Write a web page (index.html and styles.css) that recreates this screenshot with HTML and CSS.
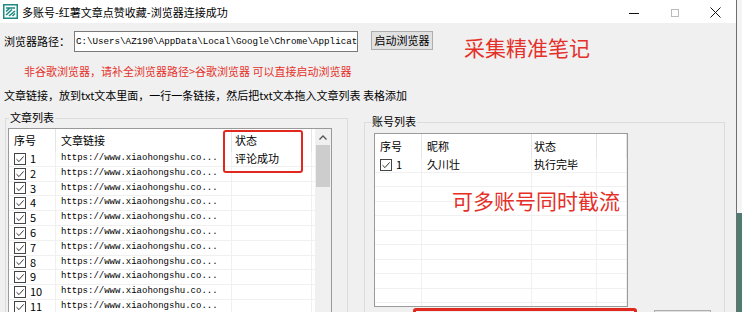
FILE: index.html
```html
<!DOCTYPE html>
<html lang="zh-CN">
  <head>
    <meta charset="UTF-8" />
    <meta name="viewport" content="width=device-width, initial-scale=1.0" />
    <title>多账号-红薯文章点赞收藏</title>
    <link rel="stylesheet" href="styles.css">
  </head>
  <body>
    <div class="desktop">
      <div class="window">
        <div class="titlebar">
          <svg class="app-icon" viewBox="0 0 15 15">
            <rect x="0.75" y="0.75" width="13.5" height="13.5" fill="#fff" stroke="#1d8a80" stroke-width="1.5" />
            <path d="M3 4H12M3 7.5L7 4M3 11L9 5.5M6 12L12 7M9.5 12L12 9.5" stroke="#1d8a80" stroke-width="1.6" fill="none" />
          </svg>
          <span class="title">多账号-红薯文章点赞收藏-浏览器连接成功</span>
          <div class="controls">
            <span class="ctl">
              <svg width="10" height="10"><path d="M0 5.5H10" stroke="#111" /></svg>
            </span>
            <span class="ctl">
              <svg width="10" height="10"><rect x="1.5" y="1.5" width="7" height="7" fill="none" stroke="#bbb" /></svg>
            </span>
            <span class="ctl">
              <svg width="11" height="11"><path d="M0.5 0.5L10.5 10.5M10.5 0.5L0.5 10.5" stroke="#111" /></svg>
            </span>
          </div>
        </div>

        <div class="content">
          <div class="path-row">
            <label class="path-label" for="browser-path">浏览器路径：</label>
            <input type="text" class="path-input" id="browser-path" value="C:\Users\AZ190\AppData\Local\Google\Chrome\Application\chrome.exe" />
            <button type="button" class="btn btn-launch">启动浏览器</button>
            <span class="big-note">采集精准笔记</span>
          </div>
          <p class="hint">非谷歌浏览器，请补全浏览器路径&gt;谷歌浏览器 可以直接启动浏览器</p>
          <p class="tip">文章链接，放到txt文本里面，一行一条链接，然后把txt文本拖入文章列表 表格添加</p>

          <div class="groups">
            <div class="group group-left">
              <span class="group-title">文章列表</span>
              <div class="listview lv-articles">
                <div class="lv-body">
                  <div class="lv-head">
                    <span>序号</span><span>文章链接</span><span>状态</span><span></span>
                  </div>
                  <div id="article-rows"></div>
                </div>
                <div class="scrollbar">
                  <span class="arrow">
                    <svg width="8" height="5"><path d="M0.5 4.5L4 1L7.5 4.5" stroke="#555" stroke-width="1.3" fill="none" /></svg>
                  </span>
                  <span class="thumb"></span>
                </div>
                <div class="mark mark-status"></div>
              </div>
            </div>

            <div class="group group-right">
              <span class="group-title">账号列表</span>
              <div class="listview lv-accounts">
                <div class="lv-head">
                  <span>序号</span><span>昵称</span><span>状态</span><span></span>
                </div>
                <div id="account-rows"></div>
                <span class="overlay-note">可多账号同时截流</span>
              </div>
              <div class="btn-row">
                <button type="button" class="btn btn-small"></button>
              </div>
              <div class="mark mark-bottom"></div>
            </div>
          </div>
        </div>
      </div>
      <div class="side"></div>
    </div>

    <script>
      const check = `<svg class="chk" viewBox="0 0 12 12"><rect x=".5" y=".5" width="11" height="11" fill="#fff" stroke="#444"/><path d="M2.5 6.2L5 8.6L9.6 3.4" fill="none" stroke="#333"/></svg>`;

      let str = "";
      for (let i = 1; i <= 11; i += 1) {
        str += `<div class="lv-row">
                  <span class="num">${check}${i}</span>
                  <span class="url">https://www.xiaohongshu.co...</span>
                  <span>${i == 1 ? "评论成功" : ""}</span>
                  <span></span>
                </div>`;
      }
      document.getElementById("article-rows").innerHTML = str;

      let acc = `<div class="lv-row">
                   <span class="num">${check}1</span><span>久川壮</span><span>执行完毕</span><span></span>
                 </div>`;
      for (let i = 0; i < 10; i += 1) {
        acc += `<div class="lv-row"><span></span><span></span><span></span><span></span></div>`;
      }
      document.getElementById("account-rows").innerHTML = acc;
    </script>
  </body>
</html>
```

FILE: styles.css
```css
* {
  box-sizing: border-box;
}
body {
  margin: 0;
  font-family: "Noto Sans CJK SC", "Microsoft YaHei", sans-serif;
  font-size: 11px;
  color: #000;
  background: #f0f0f0;
}
.desktop {
  display: flex;
  width: 742px;
  height: 312px;
  overflow: hidden;
}
.window {
  width: 736px;
  height: 312px;
  background: #f0f0f0;
  overflow: hidden;
}
.side {
  width: 6px;
  border-left: 1px solid #6f6f6f;
  background: linear-gradient(#f4f4f4 0 213px, #4f7b73 213px);
}

/* title bar */
.titlebar {
  height: 23px;
  background: #fff;
  display: flex;
  align-items: center;
}
.app-icon {
  width: 15px;
  height: 15px;
  margin-left: 3px;
}
.title {
  margin-left: 4px;
  line-height: 14px;
}
.controls {
  margin-left: auto;
  display: flex;
}
.ctl {
  width: 41px;
  height: 23px;
  display: flex;
  align-items: center;
  justify-content: center;
  padding-top: 2px;
}

/* top area */
.content {
  padding-left: 4px;
}
.path-row {
  display: flex;
  align-items: flex-start;
  height: 27px;
  margin-top: 8px;
}
.path-label {
  width: 70px;
  line-height: 21px;
}
.path-input {
  width: 284px;
  height: 21px;
  border: 1px solid #7a7a7a;
  padding: 0 0 0 1px;
  background: #fff;
  font-family: "Liberation Mono", monospace;
  font-size: 9.2px;
  outline: none;
}
.btn {
  border: 1px solid #adadad;
  background: #e1e1e1;
  font-family: inherit;
  font-size: 11px;
  padding: 0;
}
.btn-launch {
  margin-left: 13px;
  width: 62px;
  height: 19px;
  line-height: 17px;
}
.big-note {
  margin-left: 31px;
  margin-top: 5px;
  font-size: 21px;
  line-height: 22px;
  color: #e5302a;
}
.hint {
  margin: 6px 0 0 20px;
  line-height: 14px;
  color: #e5302a;
}
.tip {
  margin: 10px 0 0 0;
  line-height: 14px;
}

/* group boxes */
.groups {
  display: flex;
  align-items: flex-start;
  margin: 16px 0 0 1px;
}
.group {
  position: relative;
  height: 300px;
  border: 1px solid #dcdcdc;
}
.group-left {
  width: 343px;
}
.group-right {
  width: 361px;
  margin-left: 16px;
  margin-top: 4px;
}
.group-title {
  display: block;
  width: fit-content;
  padding: 0 1px;
  background: #f0f0f0;
  line-height: 14px;
  margin-top: -9px;
}
.group-left .group-title {
  margin-left: 3px;
  margin-bottom: 4px;
}
.group-right .group-title {
  margin-left: 6px;
  margin-bottom: 5px;
}

/* list views */
.listview {
  position: relative;
  background: #fff;
  border: 1px solid #9a9a9a;
  overflow: hidden;
}
.lv-head,
.lv-row {
  display: grid;
}
.lv-head span {
  border-right: 1px solid #e5e5e5;
  padding-left: 5px;
}
.lv-row span {
  border-right: 1px solid #f0f0f0;
  border-bottom: 1px solid #f0f0f0;
  padding-left: 5px;
  white-space: nowrap;
}
.lv-row .num {
  display: flex;
  align-items: center;
  gap: 4px;
}
.chk {
  width: 12px;
  height: 12px;
  flex: none;
}
.url {
  font-family: "Liberation Mono", monospace;
  font-size: 9px;
}

.lv-articles {
  display: flex;
  width: 324px;
  height: 200px;
  margin-left: 2px;
}
.lv-body {
  width: 306px;
}
.lv-articles .lv-head,
.lv-articles .lv-row {
  grid-template-columns: 47px 176px 80px 3px;
}
.lv-articles .lv-head {
  height: 23px;
  line-height: 23px;
}
.lv-articles .lv-row {
  height: 14.8px;
  line-height: 13.8px;
}
.lv-articles .lv-row span:nth-child(3),
.lv-articles .lv-head span:nth-child(3) {
  padding-left: 3px;
}
.scrollbar {
  width: 16px;
  background: #f0f0f0;
  display: flex;
  flex-direction: column;
  align-items: center;
}
.arrow {
  height: 16px;
  display: flex;
  align-items: center;
  justify-content: center;
}
.thumb {
  width: 14px;
  height: 42px;
  background: #cdcdcd;
}

.lv-accounts {
  width: 254px;
  height: 174px;
  margin-left: 9px;
}
.lv-accounts .lv-head,
.lv-accounts .lv-row {
  grid-template-columns: 47px 110px 65px 30px;
}
.lv-accounts .lv-head {
  height: 24px;
  line-height: 24px;
}
.lv-accounts .lv-row {
  height: 14.55px;
  line-height: 13.5px;
}
.lv-accounts .lv-row span:nth-child(3),
.lv-accounts .lv-head span:nth-child(3) {
  padding-left: 2px;
}
.overlay-note {
  position: absolute;
  left: 77px;
  top: 54px;
  font-size: 21px;
  line-height: 24px;
  color: #e5302a;
}
.btn-row {
  display: flex;
  justify-content: flex-end;
  padding-right: 13px;
  margin-top: 3px;
}
.btn-small {
  width: 57px;
  height: 20px;
}

/* red annotation boxes */
.mark {
  position: absolute;
  border: 2px solid #e0281f;
  border-radius: 3px;
}
.mark-status {
  left: 214px;
  top: 1px;
  width: 80px;
  height: 43px;
}
.mark-bottom {
  left: 48px;
  top: 185px;
  width: 224px;
  height: 40px;
  border-width: 3px;
}
```
